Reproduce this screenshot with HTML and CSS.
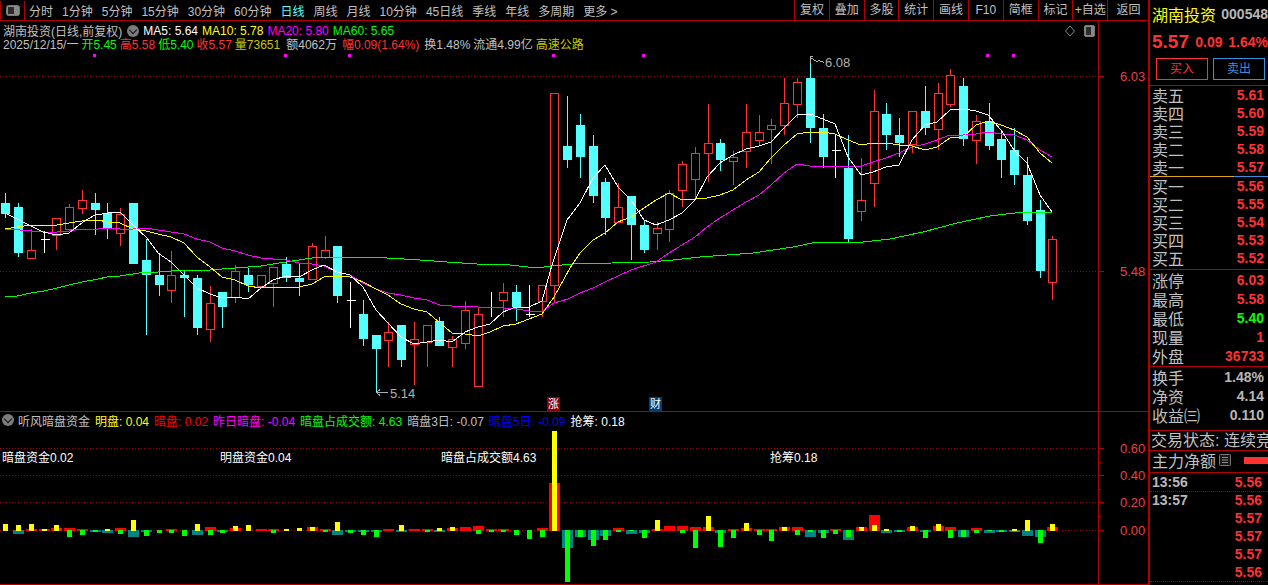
FILE: index.html
```html
<!DOCTYPE html>
<html lang="zh-CN">
<head>
<meta charset="utf-8">
<title>湖南投资</title>
<link rel="stylesheet" href="styles.css">
</head>
<body>
<div class="app">
  <div class="left">
    <nav class="toolbar">
      <div class="tool-icon"><svg class="panel-icon" viewBox="0 0 14 11"><rect x="0.5" y="0.5" width="13" height="10" rx="2"/><rect class="inner" x="2" y="2" width="6" height="7"/></svg></div>
      <div class="periods">
        <span>分时</span><span>1分钟</span><span>5分钟</span><span>15分钟</span><span>30分钟</span><span>60分钟</span><span class="active">日线</span><span>周线</span><span>月线</span><span>10分钟</span><span>45日线</span><span>季线</span><span>年线</span><span>多周期</span><span>更多 &gt;</span>
      </div>
      <div class="actions">
        <span>复权</span><span>叠加</span><span>多股</span><span>统计</span><span>画线</span><span>F10</span><span>简框</span><span>标记</span><span>+自选</span><span>返回</span>
      </div>
    </nav>

    <section class="price-pane">
      <svg class="chart" viewBox="0 21 1149 390" width="1149" height="390">
        <g id="price-grid" class="dots">
          <line x1="0" y1="76.5" x2="1098" y2="76.5"/>
          <line x1="0" y1="271.5" x2="1098" y2="271.5"/>
        </g>
        <g class="ticks">
          <line x1="1098" y1="76.5" x2="1104" y2="76.5"/>
          <line x1="1098" y1="271.5" x2="1104" y2="271.5"/>
          <line x1="1098.5" y1="21" x2="1098.5" y2="411"/>
        </g>
        <g id="marks"></g>
        <g id="candles"></g>
        <g id="averages"></g>
        <path class="flag" d="M810.5 63V56.5H813M810.5 58.5H813M813 59.5L817 61.5L819 60.5L824 62.5"/>
        <path class="flag" d="M388 392.5H376.5M380 389.5L376.5 392.5L380 395.5"/>
        <text class="note" x="825" y="67">6.08</text>
        <text class="note" x="390" y="398">5.14</text>
        <text class="axis-text" x="1120" y="81">6.03</text>
        <text class="axis-text" x="1120" y="276">5.48</text>
        <path class="diamond" d="M1070 26L1074.5 31L1070 36L1065.5 31Z"/>
        <g class="box-icon">
          <rect x="1084.5" y="25.5" width="10" height="11" rx="2"/>
          <rect class="inner" x="1086" y="27" width="5" height="8"/>
        </g>
      </svg>
      <div class="info">
        <div class="info-row">
          <span class="grey">湖南投资(日线,前复权)</span>
          <span class="chevron"></span>
          <span class="white ma">MA5: 5.64</span>
          <span class="yellow ma">MA10: 5.78</span>
          <span class="magenta ma">MA20: 5.80</span>
          <span class="green ma">MA60: 5.65</span>
        </div>
        <div class="info-row quote-row">
          <span class="grey">2025/12/15/一</span>
          <span class="green">开5.45</span>
          <span class="red">高5.58</span>
          <span class="green">低5.40</span>
          <span class="red">收5.57</span>
          <span class="olive">量73651</span>
          <span class="grey spaced-lg">额4062万</span>
          <span class="red spaced">幅0.09(1.64%)</span>
          <span class="grey spaced">换1.48%</span>
          <span class="grey">流通4.99亿</span>
          <span class="olive">高速公路</span>
        </div>
      </div>
      <span class="badge badge-red">涨</span>
      <span class="badge badge-blue">财</span>
    </section>

    <section class="sub-pane">
      <svg class="chart" viewBox="0 412 1149 172" width="1149" height="172">
        <g class="dots">
          <line x1="0" y1="448.5" x2="1098" y2="448.5"/>
          <line x1="0" y1="475.5" x2="1098" y2="475.5"/>
          <line x1="0" y1="502.5" x2="1098" y2="502.5"/>
          <line x1="0" y1="530.5" x2="1098" y2="530.5"/>
        </g>
        <g class="ticks">
          <line x1="1098.5" y1="412" x2="1098.5" y2="584"/>
          <line x1="1098" y1="448.5" x2="1104" y2="448.5"/>
          <line x1="1098" y1="462.5" x2="1101" y2="462.5"/>
          <line x1="1098" y1="475.5" x2="1104" y2="475.5"/>
          <line x1="1098" y1="489.5" x2="1101" y2="489.5"/>
          <line x1="1098" y1="502.5" x2="1104" y2="502.5"/>
          <line x1="1098" y1="516.5" x2="1101" y2="516.5"/>
          <line x1="1098" y1="530.5" x2="1104" y2="530.5"/>
        </g>
        <g id="bars"></g>
        <text class="label-text" x="2" y="462">暗盘资金0.02</text>
        <text class="label-text" x="220" y="462">明盘资金0.04</text>
        <text class="label-text" x="441" y="462">暗盘占成交额4.63</text>
        <text class="label-text" x="770" y="462">抢筹0.18</text>
        <text class="axis-text" x="1120" y="453">0.60</text>
        <text class="axis-text" x="1120" y="480">0.40</text>
        <text class="axis-text" x="1120" y="507">0.20</text>
        <text class="axis-text" x="1120" y="535">0.00</text>
      </svg>
      <div class="info sub-info">
        <div class="info-row sub-row">
          <span class="chevron"></span>
          <span class="grey">听风暗盘资金</span>
          <span class="yellow">明盘: 0.04</span>
          <span class="pure-red">暗盘: 0.02</span>
          <span class="magenta">昨日暗盘: -0.04</span>
          <span class="green">暗盘占成交额: 4.63</span>
          <span class="grey">暗盘3日: -0.07</span>
          <span class="blue">暗盘5日: -0.09</span>
          <span class="white">抢筹: 0.18</span>
        </div>
      </div>
    </section>
  </div>

  <aside class="side">
    <header class="stock-head">
      <span class="stock-name">湖南投资</span>
      <span class="stock-code">000548</span>
    </header>
    <div class="stock-quote">
      <span class="last">5.57</span>
      <span class="chg">0.09</span>
      <span class="pct">1.64%</span>
    </div>
    <div class="trade-buttons">
      <span class="buy">买入</span>
      <span class="sell">卖出</span>
    </div>
    <div class="book sell-book">
      <div class="row"><span>卖五</span><b>5.61</b></div>
      <div class="row"><span>卖四</span><b>5.60</b></div>
      <div class="row"><span>卖三</span><b>5.59</b></div>
      <div class="row"><span>卖二</span><b>5.58</b></div>
      <div class="row"><span>卖一</span><b>5.57</b></div>
    </div>
    <div class="split"></div>
    <div class="book buy-book">
      <div class="row"><span>买一</span><b>5.56</b></div>
      <div class="row"><span>买二</span><b>5.55</b></div>
      <div class="row"><span>买三</span><b>5.54</b></div>
      <div class="row"><span>买四</span><b>5.53</b></div>
      <div class="row"><span>买五</span><b>5.52</b></div>
    </div>
    <div class="book stats">
      <div class="row"><span>涨停</span><b>6.03</b></div>
      <div class="row"><span>最高</span><b>5.58</b></div>
      <div class="row"><span>最低</span><b class="up-green">5.40</b></div>
      <div class="row"><span>现量</span><b>1</b></div>
      <div class="row"><span>外盘</span><b>36733</b></div>
    </div>
    <div class="book stats extra">
      <div class="row"><span>换手</span><b class="neutral">1.48%</b></div>
      <div class="row"><span>净资</span><b class="neutral">4.14</b></div>
      <div class="row"><span>收益㈢</span><b class="neutral">0.110</b></div>
    </div>
    <div class="status-line">交易状态: 连续竞价</div>
    <div class="net-line">
      <span>主力净额</span>
      <svg class="list-icon" viewBox="0 0 12 12"><rect x="0.5" y="0.5" width="11" height="11" rx="1"/><path d="M3 3.5H9M3 6H9M3 8.5H9"/></svg>
      <i class="net-bar"></i>
    </div>
    <div class="trades">
      <div class="tick-row dotted"><span>13:56</span><b>5.56</b></div>
      <div class="tick-row"><span>13:57</span><b>5.56</b></div>
      <div class="tick-row"><span></span><b>5.57</b></div>
      <div class="tick-row"><span></span><b>5.57</b></div>
      <div class="tick-row"><span></span><b>5.57</b></div>
      <div class="tick-row dotted"><span></span><b>5.56</b></div>
    </div>
  </aside>
</div>
<script src="script.js"></script>
</body>
</html>
```

FILE: styles.css
```css
* { box-sizing: border-box; }
html, body { margin: 0; height: 100%; background: #000; overflow: hidden; }
body { font-family: "Liberation Sans", "Noto Sans CJK SC", sans-serif; font-size: 12px; color: #c0c0c0; }

.app { display: grid; grid-template-columns: 1150px 118px; width: 1268px; height: 585px; }
.left { width: 1150px; height: 585px; border-right: 2px solid #b00000; border-bottom: 1px solid #b00000; display: flex; flex-direction: column; }

.toolbar { height: 21px; border-bottom: 1px solid #b00000; display: flex; align-items: stretch; flex: none; }
.tool-icon { width: 25px; margin-top: 1px; border-left: 1px solid #b00000; border-right: 1px solid #b00000; display: flex; align-items: center; justify-content: center; }
.panel-icon { width: 14px; height: 11px; }
.panel-icon rect { fill: #8a8a8a; stroke: #777; }
.panel-icon .inner { fill: #2c2c2c; stroke: none; }
.periods { display: flex; gap: 9px; align-items: center; padding-left: 4px; flex: 1; }
.periods .active { color: #54ffff; }
.actions { display: flex; width: 355px; margin-right: -1px; }
.actions span { width: 34.8px; flex: none; border-left: 1px solid #b00000; text-align: center; line-height: 20px; }
.actions span:last-child { flex: 1; }

.price-pane { position: relative; height: 391px; flex: none; border-bottom: 1px solid #b00000; }
.sub-pane { position: relative; flex: 1; }
.chart { display: block; shape-rendering: crispEdges; }
.info { position: absolute; left: 0; top: 0; padding: 2px 0 0 3px; }
.info-row { display: flex; align-items: center; height: 15px; gap: 4px; white-space: nowrap; }
.quote-row { gap: 3px; height: 14px; margin-top: -2px; }
.spaced { margin-left: 2px; }
.spaced-lg { margin-left: 3px; }
.sub-info { padding: 0 0 0 2px; }
.sub-row { gap: 5px; height: 16px; }
.chevron { width: 12px; height: 12px; border-radius: 50%; background: #7c7c7c; position: relative; flex: none; margin: 0 0 0 1px; }
.chevron::after { content: ""; position: absolute; left: 3px; top: 2px; width: 5px; height: 5px; border-right: 1.5px solid #111; border-bottom: 1.5px solid #111; transform: rotate(45deg); }
.sub-row .chevron { margin: 0 -1px 0 0; }

.grey { color: #c0c0c0; }
.white { color: #fff; }
.yellow { color: #ffff00; }
.olive { color: #c8c800; }
.magenta { color: #ff00ff; }
.green { color: #00ff00; }
.red { color: #ff3232; }
.pure-red { color: #ff0000; }
.blue { color: #0000ff; }

.badge { position: absolute; top: 376px; width: 13px; height: 14px; color: #fff; text-align: center; line-height: 14px; font-size: 11px; }
.badge-red { left: 547px; background: #8b0000; }
.badge-blue { left: 649px; background: #0b3a70; }

/* chart pieces */
.dots line { stroke: #a00000; stroke-dasharray: 1 2; shape-rendering: crispEdges; }
.ticks line { stroke: #b00000; }
.axis-text { fill: #e84040; font-size: 13px; }
.note { fill: #b0b0b0; font-size: 13px; }
.label-text { fill: #fff; font-size: 12px; }
.flag { fill: none; stroke: #b0b0b0; }
.diamond { fill: none; stroke: #8a8a8a; shape-rendering: auto; }
.box-icon rect { fill: #8a8a8a; stroke: #777; }
.box-icon .inner { fill: #2c2c2c; stroke: none; }
.magenta-mark { fill: #ff00ff; }
.wick-up { stroke: #ff3232; }
.wick-down { stroke: #54ffff; }
.wick-flat { stroke: #fff; }
.body-up { fill: #000; stroke: #ff3232; }
.body-down { fill: #54ffff; }
.ma-line { fill: none; stroke-width: 1; }
.ma5 { stroke: #fff; }
.ma10 { stroke: #ffff00; }
.ma20 { stroke: #ff00ff; }
.ma60 { stroke: #00ff00; }
.bar-red { fill: #ff0000; }
.bar-yellow { fill: #ffff00; }
.bar-teal { fill: #008484; }
.bar-green { fill: #00ff00; }

/* side panel */
.side { width: 118px; height: 585px; overflow: hidden; display: flex; flex-direction: column; }
.stock-head { height: 26px; flex: none; display: flex; align-items: center; justify-content: space-between; padding: 2px 0 0 2px; white-space: nowrap; }
.stock-name { color: #ffff00; font-size: 16px; }
.stock-code { color: #b8b8b8; font-weight: bold; font-size: 14px; }
.stock-quote { height: 32px; flex: none; display: flex; align-items: center; padding-left: 2px; color: #ff3232; font-weight: bold; white-space: nowrap; }
.last { font-size: 19px; width: 47px; }
.chg { font-size: 14px; width: 36px; }
.pct { font-size: 14px; }
.trade-buttons { height: 27px; flex: none; display: flex; gap: 5px; padding-left: 6px; }
.trade-buttons span { width: 52px; height: 22px; border: 1px solid; text-align: center; line-height: 20px; font-size: 12px; }
.buy { color: #ff3232; border-color: #ff3232; }
.sell { color: #3a8fdd; border-color: #3a8fdd; }

.book { border-top: 1px solid #b00000; padding: 0 4px 0 2px; flex: none; }
.row { height: 18px; display: flex; align-items: center; justify-content: space-between; font-size: 16px; color: #c0c0c0; white-space: nowrap; }
.row b, .tick-row b { color: #ff3232; font-size: 14px; }
.sell-book { height: 91px; }
.split { height: 1px; background: linear-gradient(90deg, #e0a020 0 84px, #3a8fdd 84px); flex: none; }
.buy-book { border-top: 0; height: 92px; }
.stats { height: 97px; }
.stats .row { height: 19px; }
.row .up-green { color: #00ff00; }
.row .neutral { color: #b8b8b8; }
.extra { height: 64px; }
.status-line { height: 20px; flex: none; border-top: 1px solid #b00000; padding-left: 1px; font-size: 16px; line-height: 19px; white-space: nowrap; overflow: hidden; color: #c0c0c0; }
.net-line { height: 23px; flex: none; border-top: 1px solid #b00000; border-bottom: 1px solid #b00000; display: flex; align-items: center; padding: 0 0 3px 2px; font-size: 16px; white-space: nowrap; color: #c0c0c0; }
.list-icon { width: 12px; height: 12px; margin-left: 3px; flex: none; }
.list-icon rect { fill: #1a1a1a; stroke: #777; }
.list-icon path { stroke: #8a8a8a; fill: none; }
.net-bar { display: block; flex: 1; height: 7px; margin: 0 0 0 13px; background: #ff3232; }
.tick-row { height: 18px; display: flex; align-items: center; justify-content: space-between; padding: 0 6px 0 2px; }
.tick-row span { color: #b8b8b8; font-weight: bold; font-size: 14px; }
.tick-row.dotted { border-bottom: 1px dotted #a00000; height: 19px; }
.tick-row.dotted + .tick-row { margin-top: -1px; }
```

FILE: script.js
```js
var NS = "http://www.w3.org/2000/svg";
var STEP = 12.77, START = 5.3;

// [type, bodyTop, bodyBottom, wickTop, wickBottom]  u=red hollow, d=cyan solid, f=white cross
var candles = [
["d",203,214,193,218],["d",207,253,203,257],["u",250,258,229,258],["f",239,239,231,253],["u",218,235,218,250],
["u",207,229,204,229],["u",200,208,190,214],["d",203,210,193,235],["d",213,228,203,239],["u",214,233,208,246],
["d",203,264,203,264],["d",260,275,239,335],["d",275,285,253,296],["u",275,290,251,303],["d",275,278,271,317],
["d",278,328,275,335],["u",303,329,286,342],["d",292,307,292,328],["u",271,297,265,303],["d",275,285,268,292],
["u",275,286,275,286],["u",267,283,267,307],["d",264,278,257,282],["d",278,282,264,296],["u",246,279,243,279],
["u",250,257,236,259],["d",246,296,246,303],["f",300,300,282,328],["d",314,339,300,346],["d",335,349,335,393],
["u",332,340,322,367],["d",325,360,325,367],["u",339,344,322,385],["u",325,342,325,367],["d",321,346,317,346],
["u",339,347,336,367],["u",310,343,301,349],["u",314,386,308,386],["f",307,307,292,317],["u",292,300,283,317],
["d",292,307,285,321],["f",314,314,285,317],["u",285,301,285,317],["u",93,285,93,303],["d",146,160,96,168],
["d",125,157,114,178],["d",146,196,135,203],["d",182,218,178,235],["u",207,222,183,222],["d",196,225,196,260],
["d",225,250,221,253],["u",228,233,222,250],["u",193,229,190,242],["u",164,190,161,207],["u",153,179,147,199],
["u",143,153,104,182],["d",143,160,139,171],["u",157,161,151,185],["u",132,151,104,168],["u",132,140,115,145],
["u",125,129,119,164],["u",103,125,78,135],["u",82,104,78,118],["d",78,128,60,143],["d",128,157,114,168],
["f",150,150,135,178],["d",168,239,135,242],["u",200,211,158,221],["u",111,183,90,207],["d",114,135,103,150],
["d",135,143,118,157],["u",111,144,111,153],["d",111,128,86,135],["u",93,129,83,150],["u",75,104,69,107],
["d",86,139,78,146],["u",121,140,115,164],["d",121,146,103,150],["d",139,160,132,178],["d",150,175,128,185],
["d",175,221,157,225],["d",210,271,200,278],["u",239,282,236,300]
];

var averages = {
ma5: [[5,213],[43,232],[57,235],[69,233],[83,222],[95,215],[115,212],[120,212],[133,225],[147,238],[158,253],[171,262],[184,275],[197,288],[210,294],[222,298],[235,297],[248,299],[261,288],[273,280],[286,276],[299,277],[312,270],[324,265],[337,272],[350,275],[363,287],[376,310],[388,323],[401,337],[414,344],[427,342],[440,340],[452,342],[465,332],[478,327],[490,324],[503,312],[516,307],[529,307],[542,301],[552,265],[567,220],[580,203],[593,178],[605,165],[618,187],[631,200],[644,220],[656,225],[669,220],[682,213],[695,200],[707,177],[720,163],[733,155],[746,149],[759,146],[771,142],[784,128],[797,115],[810,114],[823,119],[835,124],[848,157],[861,175],[873,172],[886,167],[899,165],[912,140],[925,125],[937,122],[950,110],[963,109],[976,111],[988,115],[1001,130],[1014,150],[1027,163],[1040,195],[1052,212]],
ma10: [[5,229],[17,227],[31,225],[44,225],[57,225],[69,223],[82,221],[98,220],[107,222],[120,223],[133,229],[146,231],[158,234],[171,237],[184,243],[197,257],[210,267],[222,277],[235,280],[248,286],[261,288],[273,287],[299,287],[312,284],[324,277],[337,276],[350,277],[363,282],[376,289],[388,295],[401,304],[414,309],[427,312],[440,323],[452,333],[465,334],[478,336],[490,332],[503,326],[516,324],[529,319],[542,314],[554,297],[570,268],[580,253],[593,240],[605,233],[618,222],[631,217],[644,208],[656,200],[669,193],[682,200],[695,199],[707,198],[720,195],[733,190],[746,180],[759,172],[771,158],[784,145],[797,134],[810,132],[823,132],[835,134],[848,140],[861,145],[873,143],[886,143],[899,145],[912,146],[925,150],[937,147],[950,138],[963,137],[976,125],[988,121],[1001,125],[1014,130],[1027,137],[1040,153],[1052,163]],
ma20: [[5,229],[20,230],[31,231],[44,232],[57,232],[69,231],[82,229],[98,229],[107,228],[120,229],[133,229],[146,228],[158,230],[171,232],[184,234],[197,239],[210,242],[222,248],[235,251],[248,255],[261,258],[273,259],[286,260],[299,263],[312,264],[324,266],[337,272],[350,275],[363,283],[376,289],[388,293],[401,295],[414,298],[427,300],[440,305],[452,306],[465,306],[478,307],[490,307],[503,308],[516,309],[529,311],[542,312],[554,303],[568,299],[580,293],[593,288],[605,282],[618,276],[631,270],[656,262],[669,253],[682,245],[695,237],[707,227],[720,218],[733,210],[746,202],[759,195],[771,185],[784,173],[797,164],[810,166],[835,166],[848,167],[861,166],[873,162],[886,158],[899,153],[912,147],[925,144],[937,140],[950,135],[963,135],[976,134],[988,132],[1001,134],[1014,135],[1027,140],[1040,150],[1052,157]],
ma60: [[5,297],[17,296],[31,293],[44,291],[57,288],[69,285],[82,282],[98,279],[107,277],[120,276],[133,274],[146,272],[158,272],[171,271],[184,270],[210,270],[222,269],[235,268],[248,267],[261,266],[273,264],[286,262],[299,260],[312,258],[324,257],[343,257],[370,257],[387,258],[420,260],[447,262],[477,264],[510,265],[537,268],[552,266],[573,264],[612,263],[650,262],[673,260],[700,257],[727,255],[753,253],[773,250],[793,247],[817,242],[848,242],[863,242],[890,239],[923,232],[957,223],[990,216],[1023,212],[1052,212]]
};

// [red, yellow, teal, green] heights from the zero line
var bars = [
[0,7,0,0],[0,6,4,0],[2,7,0,0],[2,2,0,0],[3,6,0,0],[3,0,0,7],[2,0,0,5],[0,0,2,2],[0,2,3,0],[3,0,0,4],
[0,11,7,0],[0,0,2,6],[0,0,0,3],[2,0,0,3],[0,0,0,6],[0,7,5,0],[4,0,0,5],[0,0,2,3],[3,5,0,0],[0,6,0,0],
[2,0,0,0],[2,0,0,3],[0,2,0,0],[0,3,0,0],[4,4,0,0],[2,0,0,2],[0,9,5,0],[0,0,2,3],[0,0,2,5],[0,0,2,7],
[2,0,0,0],[0,6,2,0],[2,0,0,0],[2,0,0,2],[0,3,2,0],[3,4,0,0],[4,0,0,0],[5,0,0,4],[2,0,0,2],[2,0,0,2],
[0,0,0,5],[0,0,0,9],[3,0,0,7],[48,100,0,0],[0,0,18,52],[0,0,7,7],[0,0,10,16],[0,0,6,10],[3,0,0,2],[0,0,4,1],
[0,0,3,8],[2,11,0,0],[5,0,0,0],[5,0,0,3],[4,0,0,18],[4,15,0,0],[0,0,3,17],[2,0,0,8],[3,8,0,0],[2,0,0,5],
[2,0,0,11],[4,4,0,0],[4,0,0,5],[0,0,7,2],[0,0,3,8],[2,0,0,4],[0,0,10,7],[4,4,0,0],[16,6,0,0],[0,2,3,0],
[0,0,2,2],[4,5,0,0],[0,0,2,8],[5,7,0,0],[4,0,0,8],[0,0,7,7],[3,0,0,3],[0,0,3,1],[0,0,2,2],[0,2,2,0],
[0,11,6,0],[0,0,7,13],[4,7,0,0]
];

var marks = [94, 285, 349, 553, 643, 987, 1013];

function el(parent, name, attrs) {
  var node = document.createElementNS(NS, name);
  for (var key in attrs) node.setAttribute(key, attrs[key]);
  parent.appendChild(node);
  return node;
}
function rect(parent, cls, x, y, w, h) {
  el(parent, "rect", { "class": cls, x: x, y: y, width: w, height: h });
}

var markLayer = document.getElementById("marks");
marks.forEach(function (x) { rect(markLayer, "magenta-mark", x - 1, 54, 3, 3); });

var candleLayer = document.getElementById("candles");
candles.forEach(function (c, i) {
  var cx = Math.round(START + STEP * i) + 0.5;
  var t = c[0];
  el(candleLayer, "line", { "class": t === "u" ? "wick-up" : t === "d" ? "wick-down" : "wick-flat", x1: cx, x2: cx, y1: c[3], y2: c[4] });
  if (t === "d") rect(candleLayer, "body-down", cx - 4.5, c[1], 9, c[2] - c[1]);
  else if (t === "u") rect(candleLayer, "body-up", cx - 4, c[1] + 0.5, 8, c[2] - c[1]);
  else el(candleLayer, "line", { "class": "wick-flat", x1: cx - 4, x2: cx + 5, y1: c[1] + 0.5, y2: c[1] + 0.5 });
});

var avgLayer = document.getElementById("averages");
["ma60", "ma20", "ma10", "ma5"].forEach(function (k) {
  el(avgLayer, "polyline", { "class": "ma-line " + k, points: averages[k].map(function (p) { return p.join(","); }).join(" ") });
});

var barLayer = document.getElementById("bars");
bars.forEach(function (b, i) {
  var cx = Math.round(START + STEP * i);
  if (b[0]) rect(barLayer, "bar-red", cx - 5, 531 - b[0], 11, b[0]);
  if (b[2]) rect(barLayer, "bar-teal", cx - 5, 530, 11, b[2]);
  if (b[1]) rect(barLayer, "bar-yellow", cx - 2, 531 - b[1], 5, b[1]);
  if (b[3]) rect(barLayer, "bar-green", cx - 2, 530, 5, b[3]);
});
```
